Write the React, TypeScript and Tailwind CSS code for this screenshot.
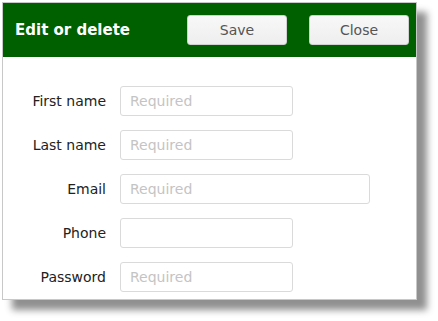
import React from "react";

const fields = [
  { label: "First name", placeholder: "Required", wide: false },
  { label: "Last name", placeholder: "Required", wide: false },
  { label: "Email", placeholder: "Required", wide: true },
  { label: "Phone", placeholder: "", wide: false },
  { label: "Password", placeholder: "Required", wide: false },
];

export default function App() {
  return (
    <div className="h-[321px] w-[438px] bg-white pl-[2px] pt-[2px]" style={{ fontFamily: '"DejaVu Sans", Verdana, sans-serif' }}>
      <div className="h-[298px] w-[415px] border border-[#c8c8c8] bg-white shadow-[10px_10px_7px_#909090]">
        <div className="flex h-[54px] items-center bg-[#006000] pl-[12px] pr-[7px]">
          <h2 className="flex-1 text-[15px] font-bold text-white">Edit or delete</h2>
          <button className="h-[30px] w-[100px] rounded-[3px] border border-[#d0d0d0] bg-gradient-to-b from-[#f8f8f8] to-[#eeeeee] text-[14px] text-[#555]">
            Save
          </button>
          <button className="ml-[22px] h-[30px] w-[100px] rounded-[3px] border border-[#d0d0d0] bg-gradient-to-b from-[#f8f8f8] to-[#eeeeee] text-[14px] text-[#555]">
            Close
          </button>
        </div>
        <div className="flex flex-col gap-[14px] pt-[29px]">
          {fields.map((f) => (
            <div key={f.label} className="flex items-center">
              <label className="w-[103px] text-right text-[14px] text-[#222]">{f.label}</label>
              <input
                placeholder={f.placeholder}
                className={`ml-[14px] h-[30px] rounded-[3px] border border-[#dadada] px-[9px] text-[14px] outline-none placeholder:text-[#c4c4c4] ${
                  f.wide ? "w-[250px]" : "w-[173px]"
                }`}
              />
            </div>
          ))}
        </div>
      </div>
    </div>
  );
}
